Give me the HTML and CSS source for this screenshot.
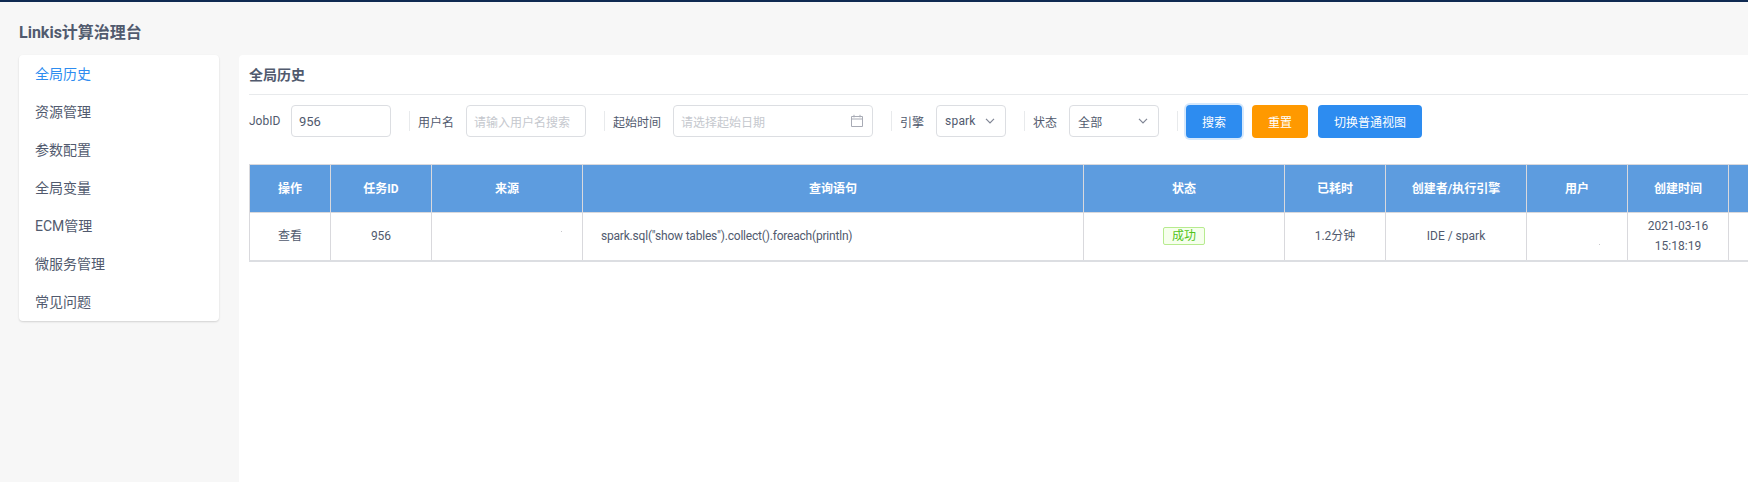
FILE: index.html
```html
<!DOCTYPE html>
<html>
<head>
	<title>Linkis计算治理台</title>
	<meta charset="UTF-8">
	<link rel="stylesheet" href="styles.css">
</head>
<body>
	<div class="page">
		<h1 class="app-title">Linkis计算治理台</h1>
		<div class="layout">
			<ul class="side-menu">
				<li class="active">全局历史</li>
				<li>资源管理</li>
				<li>参数配置</li>
				<li>全局变量</li>
				<li>ECM管理</li>
				<li>微服务管理</li>
				<li>常见问题</li>
			</ul>
			<div class="panel">
				<div class="panel-title">全局历史</div>
				<div class="search-bar">
					<div class="field first">
						<label>JobID</label>
						<div class="input job-input value">956</div>
					</div>
					<div class="field">
						<label>用户名</label>
						<div class="input user-input holder">请输入用户名搜索</div>
					</div>
					<div class="field">
						<label>起始时间</label>
						<div class="input date-input holder">
							<span>请选择起始日期</span>
							<svg class="cal-icon" width="14" height="14" viewBox="0 0 14 14"><path d="M1.5 2.5h11v10h-11zM1.5 5h11M4 .8v2.6M10 .8v2.6" fill="none" stroke="#a8abb5" stroke-width="1"/></svg>
						</div>
					</div>
					<div class="field">
						<label>引擎</label>
						<div class="input engine-select value small">
							<span>spark</span>
							<svg width="10" height="6" viewBox="0 0 10 6"><path d="M1 .8l4 4 4-4" fill="none" stroke="#808695" stroke-width="1.2"/></svg>
						</div>
					</div>
					<div class="field">
						<label>状态</label>
						<div class="input status-select value small">
							<span>全部</span>
							<svg width="10" height="6" viewBox="0 0 10 6"><path d="M1 .8l4 4 4-4" fill="none" stroke="#808695" stroke-width="1.2"/></svg>
						</div>
					</div>
					<div class="field buttons">
						<button class="btn blue focused" type="button">搜索</button>
						<button class="btn orange" type="button">重置</button>
						<button class="btn blue wide" type="button">切换普通视图</button>
					</div>
				</div>
				<table class="history">
					<colgroup>
						<col class="c-op"><col class="c-id"><col class="c-src"><col class="c-sql"><col class="c-status"><col class="c-cost"><col class="c-creator"><col class="c-user"><col class="c-time"><col class="c-last">
					</colgroup>
					<thead>
						<tr>
							<th>操作</th>
							<th>任务ID</th>
							<th>来源</th>
							<th>查询语句</th>
							<th>状态</th>
							<th>已耗时</th>
							<th>创建者/执行引擎</th>
							<th>用户</th>
							<th>创建时间</th>
							<th></th>
						</tr>
					</thead>
					<tbody>
						<tr>
							<td>查看</td>
							<td>956</td>
							<td class="has-speck"><span class="speck src-speck"></span></td>
							<td class="sql">spark.sql("show tables").collect().foreach(println)</td>
							<td><span class="tag">成功</span></td>
							<td>1.2分钟</td>
							<td>IDE / spark</td>
							<td class="has-speck"><span class="speck user-speck"></span></td>
							<td>2021-03-16<br>15:18:19</td>
							<td></td>
						</tr>
					</tbody>
				</table>
			</div>
		</div>
	</div>
</body>
</html>
```

FILE: styles.css
```css
* {
	box-sizing: border-box;
}

html, body {
	height: 100%;
}

body {
	margin: 0;
	overflow: hidden;
	font-family: Roboto, "Noto Sans CJK SC", sans-serif;
	font-size: 12px;
	color: #515a6e;
	background-color: #f7f7f7;
}

.page {
	height: 100%;
	display: flex;
	flex-direction: column;
	border-top: 2px solid #0f2a52;
	padding: 0 0 0 19px;
}

.app-title {
	margin: 0;
	height: 53px;
	padding-top: 20px;
	line-height: 22px;
	font-size: 16px;
	font-weight: 700;
	color: #515a6e;
}

.layout {
	flex: 1;
	display: flex;
	gap: 20px;
	min-height: 0;
}

.side-menu {
	list-style: none;
	margin: 0;
	padding: 0;
	width: 200px;
	height: 266px;
	flex: none;
	background-color: #ffffff;
	border-radius: 4px;
	box-shadow: 0 1px 2px rgba(0, 0, 0, 0.15);
}

.side-menu li {
	height: 38px;
	line-height: 38px;
	padding-left: 16px;
	font-size: 14px;
	color: #515a6e;
}

.side-menu li.active {
	color: #2d8cf0;
}

.panel {
	flex: 1;
	min-width: 0;
	overflow: hidden;
	background-color: #ffffff;
	border-radius: 4px 0 0 0;
	padding: 0 0 0 10px;
}

.panel-title {
	height: 40px;
	line-height: 40px;
	font-size: 14px;
	font-weight: 700;
	border-bottom: 1px solid #e8eaec;
}

.search-bar {
	display: flex;
	align-items: flex-start;
	margin-top: 10px;
	height: 33px;
}

.field {
	display: flex;
	align-items: center;
	height: 32px;
}

.field label {
	margin-right: 12px;
	white-space: nowrap;
}

.field.first label {
	width: 30px;
}

.field:not(.first)::before {
	content: "";
	width: 1px;
	height: 20px;
	margin: 0 8px 0 18px;
	background-color: #e8eaec;
}

.input {
	height: 32px;
	display: flex;
	align-items: center;
	justify-content: space-between;
	padding: 0 10px 0 7px;
	background-color: #ffffff;
	border: 1px solid #dcdee2;
	border-radius: 4px;
	white-space: nowrap;
}

.input.value {
	font-size: 13px;
	color: #515a6e;
}

.input.value.small {
	font-size: 12px;
	padding-left: 8px;
	letter-spacing: 0.2px;
}

.input.holder {
	color: #c5c8ce;
}

.job-input {
	width: 100px;
}

.user-input {
	width: 120px;
}

.date-input {
	width: 200px;
	padding-right: 8px;
}

.engine-select {
	width: 70px;
}

.status-select {
	width: 90px;
}

.btn {
	height: 33px;
	width: 56px;
	padding: 1px 0 0;
	border: 0;
	border-radius: 4px;
	font-family: inherit;
	font-size: 12px;
	color: #ffffff;
}

.btn + .btn {
	margin-left: 10px;
}

.btn.blue {
	background-color: #2d8cf0;
}

.btn.orange {
	background-color: #ff9900;
}

.btn.wide {
	width: 104px;
}

.btn.focused {
	box-shadow: 0 0 0 2px rgba(45, 140, 240, 0.2);
}

.history {
	margin-top: 26px;
	width: 1499px;
	table-layout: fixed;
	border-collapse: collapse;
	border-bottom: 2px solid #dcdee2;
}

.c-op { width: 81px; }
.c-id { width: 101px; }
.c-src { width: 151px; }
.c-sql { width: 501px; }
.c-status { width: 201px; }
.c-cost { width: 101px; }
.c-creator { width: 141px; }
.c-user { width: 101px; }
.c-time { width: 101px; }
.c-last { width: 20px; }

.history th,
.history td {
	height: 48px;
	padding: 0;
	text-align: center;
	border: 1px solid #d9d9dd;
	line-height: 20px;
}

.history th {
	background-color: #5d9cdf;
	color: #ffffff;
	font-weight: 700;
}

.history td.sql {
	text-align: left;
	padding-left: 18px;
	letter-spacing: -0.2px;
}

.history td.has-speck {
	position: relative;
}

.speck {
	position: absolute;
	width: 1px;
	height: 1px;
	background-color: #c8c8cc;
}

.src-speck {
	top: 18px;
	right: 20px;
}

.user-speck {
	top: 31px;
	left: 72px;
}

.tag {
	display: inline-block;
	width: 42px;
	height: 18px;
	line-height: 16px;
	border: 1px solid #b7eb8f;
	border-radius: 2px;
	background-color: #f6ffed;
	color: #52c41a;
}
```
